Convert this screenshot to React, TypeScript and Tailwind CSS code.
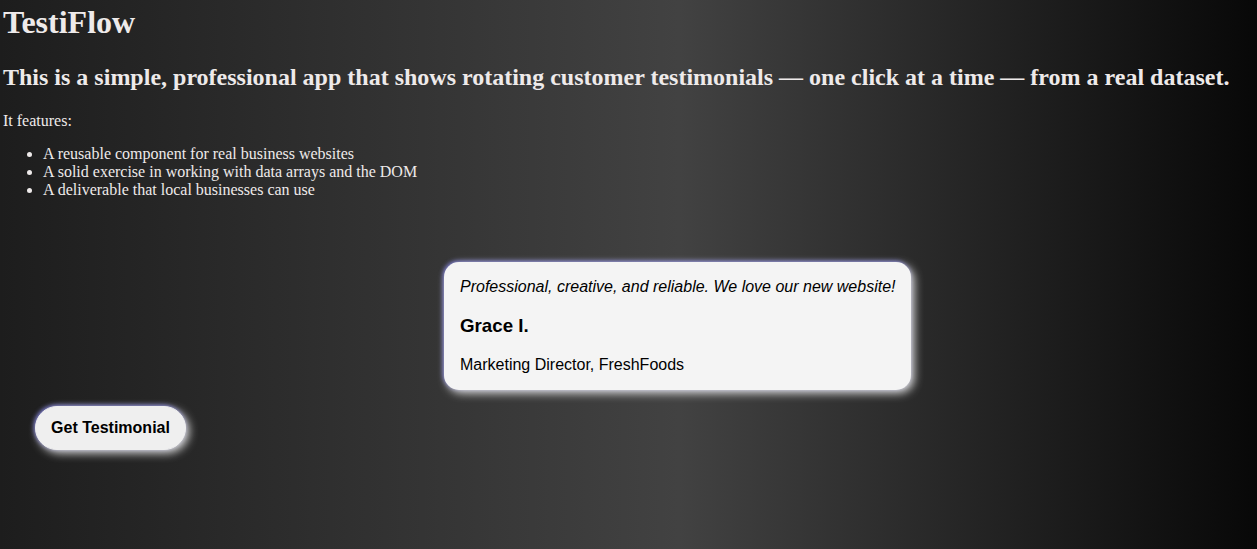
export default function App() {
  return (
    <div className="min-h-[549px] w-full bg-[linear-gradient(to_right,#1d1d1d_0%,#424242_54%,#080808_100%)] px-[3px] pt-[4px] pb-[40px] text-[#eeeaea] font-['Liberation_Serif','Times_New_Roman',serif]">
      <h1 className="m-0 text-[32px] font-bold leading-[36.8px]">TestiFlow</h1>
      <h2 className="mt-[23.5px] mb-0 text-[24px] font-bold leading-[27.6px] whitespace-nowrap">
        This is a simple, professional app that shows rotating customer testimonials — one click at a time — from a real dataset.
      </h2>
      <p className="mt-[19.92px] mb-0 text-[16px] leading-[18.4px]">It features:</p>
      <ul className="mt-[15px] mb-0 pl-10 list-disc text-[16px] leading-[18px]">
        <li>A reusable component for real business websites</li>
        <li>A solid exercise in working with data arrays and the DOM</li>
        <li>A deliverable that local businesses can use</li>
      </ul>
      <div className="mt-[63px] ml-[441px] w-fit rounded-[15px] bg-[#f4f4f4] p-4 text-black font-['Liberation_Sans',Arial,sans-serif] shadow-[3px_3px_10px_rgba(255,255,255,0.85),-1px_-1px_4px_rgba(120,120,230,0.85)]">
        <p className="m-0 text-[16px] italic leading-[18.4px] whitespace-nowrap">
          Professional, creative, and reliable. We love our new website!
        </p>
        <h3 className="my-[18.72px] text-[18.72px] font-bold leading-[21.5px]">Grace I.</h3>
        <p className="m-0 text-[16px] leading-[18.4px]">Marketing Director, FreshFoods</p>
      </div>
      <button className="mt-4 ml-8 h-[44px] w-[151px] rounded-full border border-[#efefef] bg-[#efefef] px-0 text-[16px] font-bold leading-[18.4px] text-black font-['Liberation_Sans',Arial,sans-serif] shadow-[3px_3px_10px_rgba(255,255,255,0.85),-1px_-1px_4px_rgba(120,120,230,0.85)]">
        Get Testimonial
      </button>
    </div>
  );
}
